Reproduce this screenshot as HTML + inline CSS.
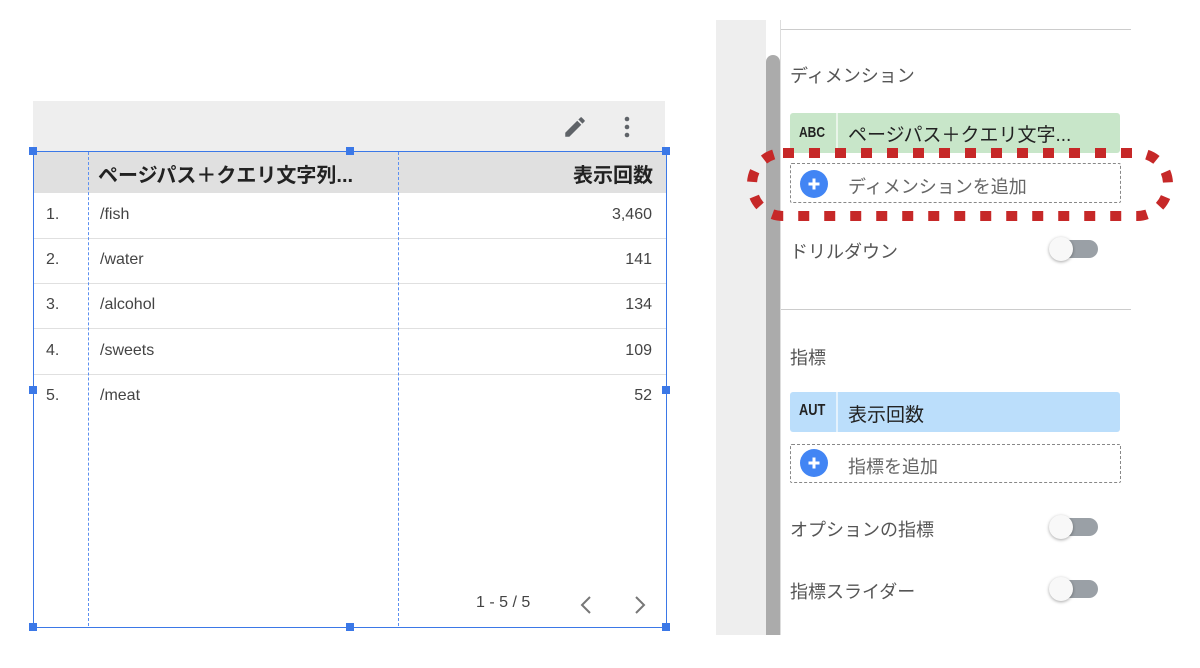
<!DOCTYPE html>
<html><head><meta charset="utf-8"><style>
body{margin:0;width:1200px;height:668px;background:#fff;position:relative;overflow:hidden;font-family:"Liberation Sans","Noto Sans CJK JP",sans-serif;}
.a{position:absolute;}
.row{position:absolute;left:34px;width:632px;height:45px;border-bottom:1px solid #e0e0e0;font-size:16px;color:#444;}
.row span{position:absolute;top:13px;}
.tog{position:absolute;width:46px;height:18px;border-radius:9px;background:#9aa0a6;}
.tog::before{content:"";position:absolute;left:-3px;top:-3px;width:24px;height:24px;border-radius:50%;background:#f8f8f8;box-shadow:0 1px 3px rgba(0,0,0,.35);}
.lbl{position:absolute;left:790px;font-size:18px;color:#555;}
.plus{position:absolute;width:28px;height:28px;}
.h{position:absolute;width:8px;height:8px;background:#3b78e7;}
</style></head><body>
<div class="a" style="left:33px;top:101px;width:632px;height:50px;background:#eeeeee"></div>
<svg class="a" style="left:562px;top:114px" width="26" height="26" viewBox="0 0 24 24"><path fill="#5f6368" d="M3 17.25V21h3.75L17.81 9.94l-3.75-3.75L3 17.25zM20.71 7.04a1 1 0 000-1.41l-2.34-2.34a1 1 0 00-1.41 0l-1.83 1.83 3.75 3.75 1.83-1.83z"/></svg>
<svg class="a" style="left:620px;top:115px" width="14" height="24"><circle cx="7" cy="4" r="2.3" fill="#5f6368"/><circle cx="7" cy="12" r="2.3" fill="#5f6368"/><circle cx="7" cy="20" r="2.3" fill="#5f6368"/></svg>
<div class="a" style="left:33px;top:151px;width:632px;height:475px;border:1px solid #3b78e7"></div>
<div class="a" style="left:34px;top:152px;width:632px;height:41px;background:#e0e0e0"></div>
<div class="a" style="left:98px;top:159px;font-size:20px;font-weight:bold;color:#222">ページパス＋クエリ文字列...</div>
<div class="a" style="left:560px;top:159px;width:93px;text-align:right;font-size:20px;font-weight:bold;color:#222">表示回数</div>
<div class="row" style="top:193px"><span style="left:12px">1.</span><span style="left:66px">/fish</span><span style="right:14px">3,460</span></div>
<div class="row" style="top:238px"><span style="left:12px">2.</span><span style="left:66px">/water</span><span style="right:14px">141</span></div>
<div class="row" style="top:283px"><span style="left:12px">3.</span><span style="left:66px">/alcohol</span><span style="right:14px">134</span></div>
<div class="row" style="top:329px"><span style="left:12px">4.</span><span style="left:66px">/sweets</span><span style="right:14px">109</span></div>
<div class="row" style="top:374px;border:none"><span style="left:12px">5.</span><span style="left:66px">/meat</span><span style="right:14px">52</span></div>
<div class="a" style="left:88px;top:152px;height:474px;border-left:1px dashed #5b8ff0"></div>
<div class="a" style="left:398px;top:152px;height:474px;border-left:1px dashed #5b8ff0"></div>
<div class="a" style="left:476px;top:594px;font-size:16px;color:#444">1 - 5 / 5</div>
<svg class="a" style="left:576px;top:594px" width="80" height="22"><path d="M14 3l-8 8 8 8" stroke="#777" stroke-width="2" fill="none"/><path d="M60 3l8 8-8 8" stroke="#777" stroke-width="2" fill="none"/></svg>
<div class="h" style="left:29px;top:147px"></div><div class="h" style="left:346px;top:147px"></div><div class="h" style="left:662px;top:147px"></div>
<div class="h" style="left:29px;top:386px"></div><div class="h" style="left:662px;top:386px"></div>
<div class="h" style="left:29px;top:623px"></div><div class="h" style="left:346px;top:623px"></div><div class="h" style="left:662px;top:623px"></div>

<div class="a" style="left:716px;top:20px;width:50px;height:615px;background:#eeeeee"></div>
<div class="a" style="left:766px;top:55px;width:14px;height:580px;background:#ababab;border-radius:7px 7px 0 0"></div>
<div class="a" style="left:780px;top:20px;width:1px;height:615px;background:#ddd"></div>
<div class="a" style="left:781px;top:29px;width:350px;height:1px;background:#ccc"></div>
<div class="a" style="left:781px;top:309px;width:350px;height:1px;background:#ccc"></div>
<div class="lbl" style="top:62px">ディメンション</div>
<div class="a" style="left:790px;top:113px;width:330px;height:40px;background:#c8e6c9;border-radius:3px"></div>
<div class="a" style="left:836px;top:113px;width:2px;height:40px;background:#fff;opacity:.6"></div>
<div class="a" style="left:799px;top:124px;font-size:15px;font-weight:bold;color:#222;transform:scaleX(.8);transform-origin:left">ABC</div>
<div class="a" style="left:848px;top:120px;font-size:19px;color:#222">ページパス＋クエリ文字...</div>
<div class="a" style="left:790px;top:163px;width:329px;height:38px;border:1px dashed #888;border-radius:2px"></div>
<svg class="plus" style="left:800px;top:170px" viewBox="0 0 28 28"><circle cx="14" cy="14" r="14" fill="#4285f4"/><path d="M14 8.5v11M8.5 14h11" stroke="#fff" stroke-width="3"/></svg>
<div class="a" style="left:848px;top:173px;font-size:18px;color:#666">ディメンションを追加</div>
<svg class="a" style="left:740px;top:145px" width="440" height="80"><rect x="12" y="8" width="416" height="63" rx="31" fill="none" stroke="#c62828" stroke-width="10" stroke-dasharray="11 15"/></svg>
<div class="lbl" style="top:238px">ドリルダウン</div>
<div class="tog" style="left:1052px;top:240px"></div>
<div class="lbl" style="top:344px">指標</div>
<div class="a" style="left:790px;top:392px;width:330px;height:40px;background:#bbdefb;border-radius:3px"></div>
<div class="a" style="left:836px;top:392px;width:2px;height:40px;background:#fff;opacity:.6"></div>
<div class="a" style="left:799px;top:402px;font-size:16px;font-weight:bold;color:#222;transform:scaleX(.8);transform-origin:left">AUT</div>
<div class="a" style="left:848px;top:400px;font-size:19px;color:#222">表示回数</div>
<div class="a" style="left:790px;top:444px;width:329px;height:37px;border:1px dashed #888;border-radius:2px"></div>
<svg class="plus" style="left:800px;top:449px" viewBox="0 0 28 28"><circle cx="14" cy="14" r="14" fill="#4285f4"/><path d="M14 8.5v11M8.5 14h11" stroke="#fff" stroke-width="3"/></svg>
<div class="a" style="left:848px;top:453px;font-size:18px;color:#666">指標を追加</div>
<div class="lbl" style="top:516px">オプションの指標</div>
<div class="tog" style="left:1052px;top:518px"></div>
<div class="lbl" style="top:578px">指標スライダー</div>
<div class="tog" style="left:1052px;top:580px"></div>
</body></html>
